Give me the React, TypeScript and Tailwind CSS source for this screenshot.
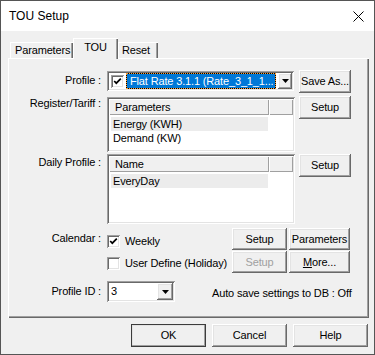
const raised =
  "shadow-[inset_-1px_-1px_0_#696969,inset_1px_1px_0_#ffffff,inset_-2px_-2px_0_#a0a0a0,inset_2px_2px_0_#e3e3e3]";
const sunken =
  "shadow-[inset_1px_1px_0_#a0a0a0,inset_-1px_-1px_0_#ffffff,inset_2px_2px_0_#696969,inset_-2px_-2px_0_#e3e3e3]";
const headerCell = "shadow-[inset_1px_1px_0_#ffffff,inset_-1px_-1px_0_#a0a0a0]";

function Btn({
  children,
  className = "",
  disabled = false,
}: {
  children: React.ReactNode;
  className?: string;
  disabled?: boolean;
}) {
  return (
    <div
      className={`flex items-center justify-center bg-[#f0f0f0] ${raised} ${
        disabled ? "text-[#a0a0a0]" : "text-black"
      } ${className}`}
    >
      {children}
    </div>
  );
}

function Check({ checked }: { checked: boolean }) {
  return (
    <div className={`flex h-[13px] w-[13px] shrink-0 items-center justify-center bg-white ${sunken}`}>
      {checked && (
        <svg width="9" height="9" viewBox="0 0 9 9">
          <path d="M1.2 4 L3.3 6.2 L7.8 1.6" stroke="#000" strokeWidth="1.7" fill="none" />
        </svg>
      )}
    </div>
  );
}

function DropBtn({ className = "" }: { className?: string }) {
  return (
    <div className={`flex items-center justify-center bg-[#f0f0f0] ${raised} ${className}`}>
      <svg width="7" height="4" viewBox="0 0 7 4">
        <path d="M0 0 H7 L3.5 4 Z" fill="#000" />
      </svg>
    </div>
  );
}

function ListBox({
  header,
  items,
  className = "",
}: {
  header: string;
  items: string[];
  className?: string;
}) {
  return (
    <div className={`flex flex-col bg-white p-[2px] ${sunken} ${className}`}>
      <div className="flex h-[16px]">
        <div className={`flex w-[160px] items-center bg-[#f0f0f0] pl-[6px] ${headerCell}`}>{header}</div>
        <div className={`flex-1 bg-[#f0f0f0] ${headerCell}`} />
      </div>
      <div className="flex flex-col pt-[2px]">
        {items.map((item, i) => (
          <div
            key={item}
            className={`ml-[2px] flex h-[14px] w-[157px] items-center pl-[2px] ${
              i === 0 ? "bg-[#ececec]" : ""
            }`}
          >
            {item}
          </div>
        ))}
      </div>
    </div>
  );
}

export default function App() {
  return (
    <div className="flex h-[355px] w-[375px] flex-col border border-[#555555] bg-[#f0f0f0] font-['Liberation_Sans',Arial,sans-serif] text-[11px] leading-[13px] tracking-[-0.15px] text-black">
      {/* title bar */}
      <div className="flex h-[30px] shrink-0 items-center justify-between bg-white pl-[8px] pr-[10px]">
        <span className="text-[12px] tracking-normal">TOU Setup</span>
        <svg width="11" height="11" viewBox="0 0 11 11">
          <path d="M0.5 0.5 L10.5 10.5 M10.5 0.5 L0.5 10.5" stroke="#000" strokeWidth="1" />
        </svg>
      </div>

      {/* tabs */}
      <div className="ml-[7px] mr-[5px] mt-[7px] flex flex-col">
        <div className="flex h-[20px] items-end pl-[2px]">
          <div className="flex h-[16px] w-[63px] items-center pl-[5px] shadow-[inset_1px_1px_0_#ffffff,inset_-1px_0_0_#696969,inset_-2px_0_0_#a0a0a0]">
            Parameters
          </div>
          <div className="relative z-10 mb-[-1px] flex h-[21px] w-[45px] items-center justify-center bg-[#f0f0f0] pb-[2px] shadow-[inset_1px_1px_0_#ffffff,inset_-1px_0_0_#696969,inset_-2px_0_0_#a0a0a0]">
            TOU
          </div>
          <div className="flex h-[16px] w-[40px] items-center pl-[4px] shadow-[inset_1px_1px_0_#ffffff,inset_-1px_0_0_#696969,inset_-2px_0_0_#a0a0a0]">
            Reset
          </div>
        </div>

        {/* panel */}
        <div className="flex h-[260px] flex-col pl-[1px] pt-[1px] shadow-[inset_1px_1px_0_#ffffff,inset_-1px_-1px_0_#696969,inset_-2px_-2px_0_#a0a0a0]">
          {/* Profile */}
          <div className="mt-[11px] flex h-[23px]">
            <div className="w-[92px] pt-[4px] text-right">Profile :</div>
            <div className={`ml-[6px] mt-[1px] flex h-[20px] w-[187px] items-center bg-white p-[2px] ${sunken}`}>
              <div className="ml-[2px]">
                <Check checked />
              </div>
              <div className="ml-[2px] flex h-[16px] flex-1 bg-black">
                <div className="flex flex-1 items-center overflow-hidden whitespace-nowrap border border-dotted border-[#ffa033] bg-[#0078d7] bg-clip-padding pl-[3px] text-white">
                  Flat Rate 3.1.1 (Rate_3_1_1...
                </div>
              </div>
              <DropBtn className="ml-[2px] h-[16px] w-[14px]" />
            </div>
            <Btn className="ml-[5px] h-[23px] w-[52px]">Save As...</Btn>
          </div>

          {/* Register/Tariff */}
          <div className="mt-[3px] flex">
            <div className="w-[92px] pt-[1px] text-right">Register/Tariff :</div>
            <ListBox
              header="Parameters"
              items={["Energy (KWH)", "Demand (KW)"]}
              className="ml-[6px] mt-[1px] h-[55px] w-[188px]"
            />
            <Btn className="ml-[4px] h-[23px] w-[52px]">Setup</Btn>
          </div>

          {/* Daily Profile */}
          <div className="mt-[2px] flex">
            <div className="w-[92px] pt-[2px] text-right">Daily Profile :</div>
            <ListBox header="Name" items={["EveryDay"]} className="ml-[6px] h-[70px] w-[188px]" />
            <Btn className="ml-[4px] h-[23px] w-[52px]">Setup</Btn>
          </div>

          {/* Calendar */}
          <div className="mt-[4px] flex h-[22px]">
            <div className="w-[92px] pt-[4px] text-right">Calendar :</div>
            <div className="ml-[6px] mt-[7px] flex h-[13px] w-[125px] items-center gap-[5px]">
              <Check checked />
              <span>Weekly</span>
            </div>
            <Btn className="h-[22px] w-[55px]">Setup</Btn>
            <Btn className="ml-[2px] h-[22px] w-[61px]">Parameters</Btn>
          </div>

          <div className="mt-[1px] flex h-[22px]">
            <div className="w-[92px]" />
            <div className="ml-[6px] mt-[6px] flex h-[13px] w-[125px] items-center gap-[5px] whitespace-nowrap">
              <Check checked={false} />
              <span>User Define (Holiday)</span>
            </div>
            <Btn disabled className="h-[22px] w-[55px]">
              Setup
            </Btn>
            <Btn className="ml-[2px] h-[22px] w-[61px]">
              <span>
                <span className="underline">M</span>ore...
              </span>
            </Btn>
          </div>

          {/* Profile ID */}
          <div className="mt-[8px] flex h-[21px]">
            <div className="w-[92px] pt-[4px] text-right">Profile ID :</div>
            <div className={`ml-[6px] flex h-[21px] w-[68px] items-center bg-white p-[2px] ${sunken}`}>
              <span className="flex-1 pl-[2px]">3</span>
              <DropBtn className="h-[17px] w-[16px]" />
            </div>
            <div className="ml-[37px] pt-[6px] whitespace-nowrap">Auto save settings to DB : Off</div>
          </div>
        </div>
      </div>

      {/* bottom buttons */}
      <div className="mt-[6px] flex justify-end gap-[6px] pr-[6px]">
        <Btn className="h-[23px] w-[75px] outline outline-1 outline-[#3c3c3c] -outline-offset-1">OK</Btn>
        <Btn className="h-[23px] w-[75px]">Cancel</Btn>
        <Btn className="h-[23px] w-[75px]">Help</Btn>
      </div>
    </div>
  );
}
